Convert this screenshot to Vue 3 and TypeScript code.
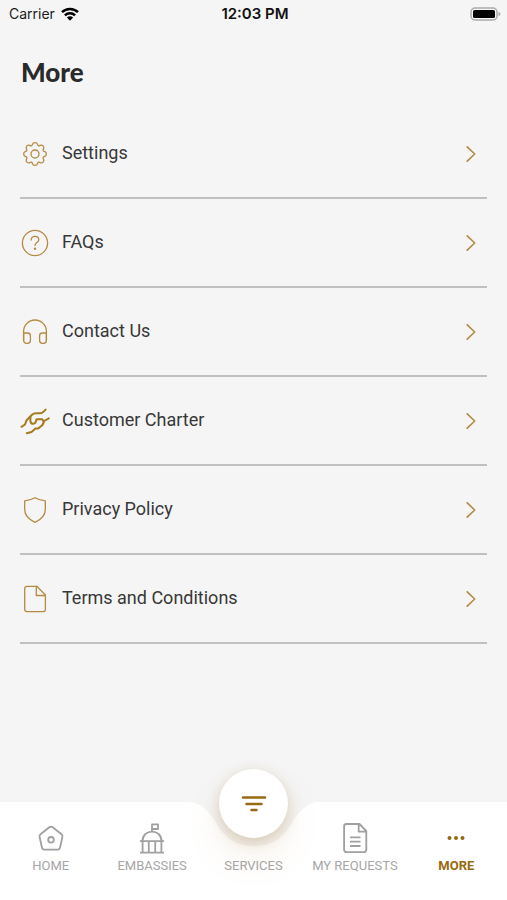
<script setup lang="ts">
import { ref } from 'vue'

interface MenuItem {
  label: string
  icon: string
}

const items: MenuItem[] = [
  { label: 'Settings', icon: 'gear' },
  { label: 'FAQs', icon: 'question' },
  { label: 'Contact Us', icon: 'headphones' },
  { label: 'Customer Charter', icon: 'hands' },
  { label: 'Privacy Policy', icon: 'shield' },
  { label: 'Terms and Conditions', icon: 'file' },
]

const tabs = ['Home', 'Embassies', 'Services', 'My Requests', 'More']
const active = ref('More')
</script>

<template>
  <div class="screen">
    <div class="status">
      <div class="carrier">
        <span>Carrier</span>
        <svg width="18" height="14" viewBox="0 0 18 14" aria-hidden="true">
          <g fill="none" stroke="#000" stroke-width="2.5">
            <path d="M1 5.2a11.4 11.4 0 0 1 16 0" />
            <path d="M3.9 8.3a7.2 7.2 0 0 1 10.2 0" />
          </g>
          <path d="M9 13.8 5.9 10.6a4.4 4.4 0 0 1 6.2 0Z" />
        </svg>
      </div>
      <time>12:03 PM</time>
      <svg class="battery" width="31" height="15" viewBox="0 0 31 15" aria-hidden="true">
        <rect x="1" y="1" width="26" height="12" rx="4" fill="#f5f5f5" stroke="#ababab" stroke-width="1.5" />
        <rect x="3" y="3" width="22" height="8" rx="1.500" fill="#000" />
        <path d="M28.500 4.700q2 .8 2 2.300t-2 2.300Z" fill="#ababab" />
      </svg>
    </div>

    <main>
      <h1>More</h1>
      <ul class="menu">
        <li v-for="item in items" :key="item.label">
          <a href="#" @click.prevent>
            <svg class="icon" width="30" height="30" viewBox="0 0 30 30" aria-hidden="true">
              <g v-if="item.icon === 'gear'">
                <path d="M12.6 5.2Q13 3.700 15 3.700T17.400 5.200C17.900 7 18.900 7.300 20.300 6.400Q21.800 5.600 23.100 6.900T23.600 9.700C22.700 11.100 23 12.100 24.800 12.600Q26.300 13 26.300 15T24.800 17.400C23 17.900 22.700 18.900 23.600 20.300Q24.400 21.800 23.100 23.100T20.300 23.600C18.900 22.700 17.900 23 17.400 24.800Q17 26.300 15 26.300T12.600 24.800C12.100 23 11.100 22.700 9.700 23.600Q8.200 24.400 6.900 23.100T6.400 20.300C7.300 18.900 7 17.900 5.200 17.400Q3.700 17 3.700 15T5.200 12.600C7 12.100 7.300 11.100 6.400 9.700Q5.600 8.200 6.900 6.900T9.700 6.400C11.100 7.300 12.100 7 12.600 5.200Z" />
                <circle cx="15" cy="15" r="4" />
              </g>
              <g v-else-if="item.icon === 'question'">
                <circle cx="15" cy="15" r="12.6" />
                <path d="M11.2 12.1c0-2.4 1.6-3.8 3.8-3.8s3.8 1.4 3.8 3.4c0 2.8-3.8 2.8-3.8 5.7" />
                <circle class="dot" cx="15" cy="20.8" r="1.2" />
              </g>
              <g v-else-if="item.icon === 'headphones'">
                <path d="M3.600 23V14.400a11.400 11.400 0 0 1 22.800 0V23" />
                <path d="M3.600 16H7.600a2.800 2.800 0 0 1 2.800 2.800V23.600a2.800 2.800 0 0 1-2.800 2.800H6.400a2.800 2.800 0 0 1-2.800-2.800ZM26.400 16H22.400a2.800 2.800 0 0 0-2.800 2.800V23.600a2.800 2.800 0 0 0 2.800 2.800h1.200a2.800 2.800 0 0 0 2.800-2.800Z" />
              </g>
              <g v-else-if="item.icon === 'hands'" class="bold">
                <path d="M1.500 20.800 5 18.500 6.600 14.200 12 8.800Q13.600 7.300 16 7.300H20.500Q22.200 7.300 25.600 3.600" />
                <path d="M10.400 10.800V15Q10.800 17.800 13 17.800T16 15.200L16.700 13.200H22.300L23.600 15.400" />
                <path d="M28.800 12.400 24.200 15 22.500 19 18.200 22.600H15.500L11.500 26 6.800 27.200" />
              </g>
              <path v-else-if="item.icon === 'shield'" d="M15 2.700C18.200 4.500 21.500 5.500 25.300 5.800V14.500C25.300 20.400 21.600 24.300 15 27.400 8.400 24.300 4.700 20.400 4.700 14.500V5.800C8.500 5.500 11.800 4.500 15 2.700Z" />
              <g v-else>
                <path d="M7 2.300H16.800L25.400 11V25.300a2.300 2.300 0 0 1-2.300 2.300H7a2.300 2.300 0 0 1-2.300-2.300V4.600A2.300 2.300 0 0 1 7 2.300Z" />
                <path d="M16.300 2.500V11.500H25.200" />
              </g>
            </svg>
            <span class="label">{{ item.label }}</span>
            <svg class="chevron" width="10" height="16" viewBox="0 0 10 16" aria-hidden="true">
              <path d="M1.200 .8 8.700 8 1.200 15.200" />
            </svg>
          </a>
        </li>
      </ul>
    </main>

    <nav class="tabbar">
      <div class="backdrop" aria-hidden="true">
        <span class="side"></span>
        <svg width="140" height="98" viewBox="0 0 140 98">
          <path fill="#fff" d="M0 0H4C16 0 24 8 31 19C39 34 50 44 70 44S101 34 109 19C116 8 124 0 136 0H140V98H0Z" />
        </svg>
        <span class="side"></span>
      </div>
      <button
        v-for="tab in tabs"
        :key="tab"
        type="button"
        :class="['tab', { active: active === tab, center: tab === 'Services' }]"
        @click="active = tab"
      >
        <span v-if="tab === 'Services'" class="bubble">
          <svg width="26" height="18" viewBox="0 0 26 18" aria-hidden="true">
            <path d="M2 2.500H24M5.500 8.900H20.500M10.500 15H15.500" />
          </svg>
        </span>
        <svg v-else class="glyph" width="30" height="32" viewBox="0 0 30 32" aria-hidden="true">
          <g v-if="tab === 'Home'">
            <path d="M13.300 5.300 4.500 12.200Q3.200 13.300 3.600 15L6 25.700Q6.400 27.600 8.400 27.600H21.600Q23.600 27.600 24 25.700L26.400 15Q26.800 13.300 25.500 12.200L16.700 5.300Q15 4 13.300 5.300Z" />
            <circle cx="15" cy="17.800" r="2.800" />
          </g>
          <g v-else-if="tab === 'Embassies'">
            <path d="M15 9.700V2.400H21V7H15M5.500 19C5.500 6.600 24.500 6.600 24.500 19M3 19.200H27M3 30.600H27M5.600 19.200V30.600M11.800 19.200V30.600M18.200 19.200V30.600M24.400 19.200V30.600" />
          </g>
          <g v-else-if="tab === 'My Requests'">
            <path d="M6.500 2H19.500L26.300 9V27.800a2.400 2.400 0 0 1-2.400 2.400H6.500a2.400 2.400 0 0 1-2.400-2.400V4.400A2.400 2.400 0 0 1 6.500 2ZM18.700 2V9.700H26.300" />
            <path d="M10 15.300H20.500M10 19.700H20.500M10 24H20.500" />
          </g>
          <g v-else class="dots">
            <circle cx="8.500" cy="16" r="2" />
            <circle cx="15" cy="16" r="2" />
            <circle cx="21.500" cy="16" r="2" />
          </g>
        </svg>
        <span class="caption">{{ tab }}</span>
      </button>
    </nav>
  </div>
</template>

<style>
body {
  margin: 0;
  background: #f5f5f5;
}
</style>

<style scoped>
.screen {
  display: flex;
  flex-direction: column;
  min-height: 100vh;
  color: #383838;
  background: #f5f5f5;
  font-family: Roboto, "Liberation Sans", sans-serif;
}

.status {
  display: grid;
  grid-template-columns: 1fr auto 1fr;
  align-items: center;
  height: 28px;
  padding: 0 6px 0 9px;
  color: #1c1c1c;
  font: 14px/20px Inter, sans-serif;
}

.carrier {
  display: flex;
  align-items: center;
  gap: 6px;
}

.status time {
  font-size: 15px;
  font-weight: 600;
  color: #111;
}

.battery {
  justify-self: end;
}

main {
  flex: 1;
  padding: 28px 20px 40px;
}

h1 {
  margin: 0 0 22px 1px;
  font: 900 26px/32px Lato, sans-serif;
  color: #2a2a2a;
}

.menu {
  margin: 0;
  padding: 0;
  list-style: none;
}

.menu a {
  display: flex;
  align-items: center;
  box-sizing: border-box;
  height: 89px;
  padding-right: 11px;
  border-bottom: 2px solid #c0c0c0;
  color: inherit;
  text-decoration: none;
}

.label {
  flex: 1;
  margin-left: 12px;
  padding-bottom: 2px;
  font-size: 18px;
  line-height: 24px;
}

.icon,
.chevron {
  fill: none;
  stroke: #b48a45;
  stroke-width: 1.3;
  stroke-linecap: round;
  stroke-linejoin: round;
}

.icon .bold {
  stroke: #a57a1f;
  stroke-width: 2;
}

.icon .dot {
  fill: #b48a45;
  stroke: none;
}

.chevron {
  stroke-width: 1.6;
}

.tabbar {
  position: relative;
  display: grid;
  grid-template-columns: repeat(5, 1fr);
  height: 98px;
}

.backdrop {
  position: absolute;
  inset: 0;
  display: flex;
}

.side {
  flex: 1;
  background: #fff;
}

.tab {
  position: relative;
  display: flex;
  flex-direction: column;
  align-items: center;
  gap: 2px;
  margin: 0;
  padding: 20px 0 0;
  border: 0;
  background: none;
  color: #a6a6a6;
  font: 13px/20px Roboto, "Liberation Sans", sans-serif;
  cursor: pointer;
}

.caption {
  text-transform: uppercase;
  white-space: nowrap;
}

.glyph {
  fill: none;
  stroke: #a0a0a0;
  stroke-width: 1.8;
  stroke-linejoin: round;
}

.active {
  color: #966a10;
  font-weight: 700;
}

.dots {
  fill: #966a10;
  stroke: none;
}

.center {
  justify-content: flex-end;
  padding: 0 0 24px;
}

.bubble {
  position: absolute;
  top: -33px;
  left: 50%;
  display: grid;
  place-items: center;
  width: 69px;
  height: 69px;
  margin-left: -34px;
  border-radius: 50%;
  background: #fff;
  box-shadow: 0 4px 14px rgba(150, 115, 50, 0.28), 0 20px 36px rgba(190, 130, 60, 0.1);
}

.bubble svg {
  fill: none;
  stroke: #966a10;
  stroke-width: 2.500;
  stroke-linecap: round;
}
</style>
